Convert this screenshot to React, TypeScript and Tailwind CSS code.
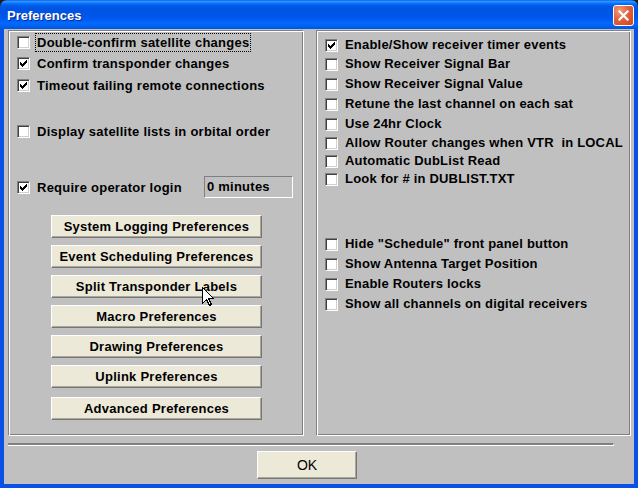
import React from "react";

const CHECK_PATH =
  "M6 0h1v1h-1z M5 1h2v1h-2z M0 2h1v1h-1z M4 2h3v1h-3z M0 3h2v1h-2z M3 3h3v1h-3z M0 4h5v1h-5z M1 5h3v1h-3z M2 6h1v1h-1z";

const Check: React.FC<{ on?: boolean }> = ({ on }) => (
  <span className="flex h-[13px] w-[13px] shrink-0 items-center justify-center border border-t-[#808080] border-l-[#808080] border-b-white border-r-white bg-white shadow-[inset_1px_1px_0_#404040,inset_-1px_-1px_0_#d4d0c8]">
    {on && (
      <svg width="7" height="7" viewBox="0 0 7 7" shapeRendering="crispEdges">
        <path d={CHECK_PATH} fill="#000" />
      </svg>
    )}
  </span>
);

const leftRows = [
  { label: "Double-confirm satellite changes", on: false, focus: true, mt: "mt-0" },
  { label: "Confirm transponder changes", on: true, focus: false, mt: "mt-[2px]" },
  { label: "Timeout failing remote connections", on: true, focus: false, mt: "mt-[3px]" },
  { label: "Display satellite lists in orbital order", on: false, focus: false, mt: "mt-[27px]" },
];

const buttons = [
  { label: "System Logging Preferences", mt: "mt-[17px]" },
  { label: "Event Scheduling Preferences", mt: "mt-[7px]" },
  { label: "Split Transponder Labels", mt: "mt-[7px]" },
  { label: "Macro Preferences", mt: "mt-[7px]" },
  { label: "Drawing Preferences", mt: "mt-[7px]" },
  { label: "Uplink Preferences", mt: "mt-[7px]" },
  { label: "Advanced Preferences", mt: "mt-[9px]" },
];

const rightRows = [
  { label: "Enable/Show receiver timer events", on: true, mt: "mt-[3px]" },
  { label: "Show Receiver Signal Bar", on: false, mt: "mt-[1px]" },
  { label: "Show Receiver Signal Value", on: false, mt: "mt-[2px]" },
  { label: "Retune the last channel on each sat", on: false, mt: "mt-[2px]" },
  { label: "Use 24hr Clock", on: false, mt: "mt-[2px]" },
  { label: "Allow Router changes when VTR  in LOCAL", on: false, mt: "mt-[1px]" },
  { label: "Automatic DubList Read", on: false, mt: "mt-0" },
  { label: "Look for # in DUBLIST.TXT", on: false, mt: "mt-0" },
  { label: 'Hide "Schedule" front panel button', on: false, mt: "mt-[47px]" },
  { label: "Show Antenna Target Position", on: false, mt: "mt-[2px]" },
  { label: "Enable Routers locks", on: false, mt: "mt-[2px]" },
  { label: "Show all channels on digital receivers", on: false, mt: "mt-[2px]" },
];

const panel =
  "flex flex-col border border-t-[#808080] border-l-[#808080] border-b-white border-r-white shadow-[inset_1px_1px_0_#ffffff,inset_-1px_-1px_0_#808080]";

const btn =
  "h-[23px] w-[211px] border border-t-white border-l-white border-b-[#767676] border-r-[#767676] bg-[#ece9d8] shadow-[inset_-1px_-1px_0_#aca899] text-[13px] font-bold tracking-[0.25px] text-black";

const App: React.FC = () => {
  return (
    <div className="relative flex h-[488px] w-[638px] flex-col overflow-hidden bg-[#1c1c1c] font-['Liberation_Sans',Arial,sans-serif] text-black">
      {/* title bar */}
      <div className="flex h-[29px] shrink-0 items-start rounded-t-[7px] bg-[linear-gradient(to_bottom,#0058ee_0%,#3593ff_4%,#288eff_7%,#127dff_10%,#036ffc_13%,#0262ee_17%,#0057e5_24%,#0054e3_30%,#0055eb_58%,#005bf5_68%,#026afe_80%,#0062ef_90%,#0056e0_100%)]">
        <span className="ml-[7px] mt-[8px] text-[13px] font-bold leading-[16px] text-white [text-shadow:1px_1px_0_#0a2a8a]">
          Preferences
        </span>
        <div className="ml-auto mr-[4px] mt-[5px] flex h-[21px] w-[21px] items-center justify-center rounded-[3px] border border-white bg-[radial-gradient(circle_at_30%_25%,#f39a7c_0%,#e2623d_45%,#cf4317_100%)]">
          <svg width="11" height="11" viewBox="0 0 11 11">
            <path d="M1.5 1.5 L9.5 9.5 M9.5 1.5 L1.5 9.5" stroke="#fff" strokeWidth="2.2" strokeLinecap="square" />
          </svg>
        </div>
      </div>

      {/* client area */}
      <div className="flex flex-1 flex-col border-x-[4px] border-b-[4px] border-[#0a50e4] bg-[#c0c0c0]">
        <div className="ml-[4px] mt-[1px] flex h-[406px]">
          {/* left panel */}
          <div className={`${panel} w-[296px] pl-[8px] pt-[2px]`}>
            {leftRows.map((r) => (
              <div key={r.label} className={`flex h-[19px] items-center ${r.mt}`}>
                <Check on={r.on} />
                <span
                  className={`ml-[5px] whitespace-pre border px-[1px] text-[13px] font-bold leading-[17px] tracking-[0.25px] ${
                    r.focus ? "border-dotted border-black" : "border-transparent"
                  }`}
                >
                  {r.label}
                </span>
              </div>
            ))}
            <div className="mt-[35px] flex h-[22px] items-center">
              <Check on />
              <span className="ml-[5px] border border-transparent px-[1px] text-[13px] font-bold leading-[17px] tracking-[0.25px]">
                Require operator login
              </span>
              <div className="ml-[20px] flex h-[22px] w-[89px] items-center border border-t-[#808080] border-l-[#808080] border-b-white border-r-white pl-[2px] text-[13px] font-bold tracking-[0.25px]">
                0 minutes
              </div>
            </div>
            {buttons.map((b) => (
              <button key={b.label} className={`${btn} ${b.mt} ml-[34px]`}>
                {b.label}
              </button>
            ))}
          </div>

          <div className="w-[12px]" />

          {/* right panel */}
          <div className={`${panel} w-[315px] pl-[8px] pt-[2px]`}>
            {rightRows.map((r) => (
              <div key={r.label} className={`flex h-[18px] items-center ${r.mt}`}>
                <Check on={r.on} />
                <span className="ml-[5px] whitespace-pre border border-transparent px-[1px] text-[13px] font-bold leading-[16px] tracking-[0.2px]">
                  {r.label}
                </span>
              </div>
            ))}
          </div>
        </div>

        {/* separator */}
        <div className="ml-[4px] mt-[7px] h-[3px] w-[606px] border-t-[2px] border-r border-b border-t-[#808080] border-r-white border-b-white" />

        <div className="mt-[5px] flex">
          <button className="ml-[253px] flex h-[28px] w-[100px] items-center justify-center border border-t-white border-l-white border-b-[#767676] border-r-[#767676] bg-[#ece9d8] shadow-[inset_-1px_-1px_0_#aca899] text-[14px] font-normal text-black">
            OK
          </button>
        </div>
      </div>

      {/* mouse pointer */}
      <svg className="absolute left-[202px] top-[287px]" width="13" height="20" viewBox="0 0 13 20" shapeRendering="crispEdges">
        <path d="M0.5 0.5 L0.5 16.5 L4.5 12.5 L7.5 18.5 L9.5 17.5 L6.5 11.5 L11.5 11.5 Z" fill="#fff" stroke="#000" strokeWidth="1" />
      </svg>
    </div>
  );
};

export default App;
